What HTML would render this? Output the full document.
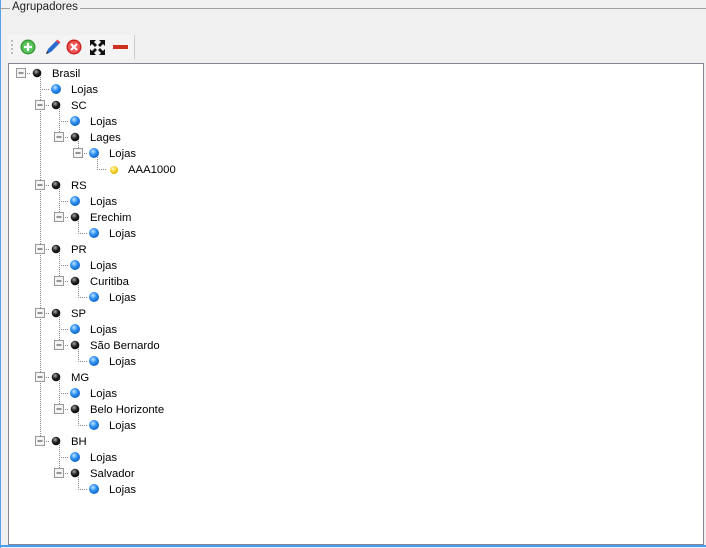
<!DOCTYPE html>
<html><head><style>
body{margin:0;width:706px;height:548px;background:#f0f0f0;position:relative;overflow:hidden;font-family:"Liberation Sans",sans-serif}
.gl{position:absolute;top:8px;left:0;width:706px;height:1px;background:#a0a0a0}
.lt{position:absolute;left:10px;top:0;background:#f0f0f0;padding:0 2px;font-size:11.5px;color:#222;line-height:15px}
.lb{position:absolute;left:0;top:0;width:1px;height:548px;background:#5aa0e6}
.bb{position:absolute;left:0;top:545px;width:706px;height:2px;background:#4a9cf0}
.tb{position:absolute;left:8px;top:35px;width:126px;height:24px;background:#f4f4f4;border-right:1px solid #ccc}
.tree{position:absolute;left:8px;top:63px;width:694px;height:480px;background:#fff;border:1px solid #828790}
</style></head><body>
<div class="lb"></div>
<div class="gl"></div><div class="lt">Agrupadores</div>
<div class="tb"></div>
<svg style="position:absolute;left:0;top:0" width="706" height="548">
<g fill="#bbb"><rect x="11" y="40" width="2" height="2"/><rect x="11" y="44" width="2" height="2"/><rect x="11" y="48" width="2" height="2"/><rect x="11" y="52" width="2" height="2"/></g>
<circle cx="28" cy="47" r="7.5" fill="#3a9a3a"/><circle cx="28" cy="47" r="6" fill="#5cc45c"/><path d="M24 47h8M28 43v8" stroke="#fff" stroke-width="2.2"/>
<path d="M46 54l2-5 8-8 3 3-8 8z" fill="#2a6bd0"/><path d="M56 41l3 3 1.5-1.5-3-3z" fill="#e04040"/><path d="M46 54l1-3 2 2z" fill="#333"/>
<circle cx="74" cy="47" r="7.5" fill="#c22"/><circle cx="74" cy="47" r="6" fill="#e55"/><path d="M71 44l6 6M77 44l-6 6" stroke="#fff" stroke-width="2.2"/>
<g fill="#111"><path d="M90 40h6l-2 2 3 3-2 2-3-3-2 2z"/><path d="M105 40v6l-2-2-3 3-2-2 3-3-2-2z"/><path d="M90 55v-6l2 2 3-3 2 2-3 3 2 2z"/><path d="M105 55h-6l2-2-3-3 2-2 3 3 2-2z"/></g>
<rect x="113" y="45" width="15" height="4" fill="#d03020"/>
</svg>
<div class="tree"></div>
<svg style="position:absolute;left:0;top:0" width="706" height="548" font-family="Liberation Sans, sans-serif" font-size="11.3">
<defs>
<radialGradient id="k" cx="40%" cy="35%" r="70%"><stop offset="0" stop-color="#aaa"/><stop offset=".5" stop-color="#222"/><stop offset="1" stop-color="#000"/></radialGradient>
<radialGradient id="b" cx="40%" cy="35%" r="70%"><stop offset="0" stop-color="#bfe3ff"/><stop offset=".5" stop-color="#2a8ef0"/><stop offset="1" stop-color="#0b5fc0"/></radialGradient>
<radialGradient id="y" cx="40%" cy="35%" r="70%"><stop offset="0" stop-color="#fff8c0"/><stop offset=".6" stop-color="#f5d020"/><stop offset="1" stop-color="#d8a800"/></radialGradient>
<g id="bx"><rect x="-4.5" y="-4.5" width="9" height="9" fill="#f4f4f4" stroke="#999"/><path d="M-2.5 0h5" stroke="#333"/></g>
</defs>
<g stroke="#888" stroke-dasharray="1 1" fill="none">
<path d="M40.5 73v368M59.5 105v32M78.5 137v16M97.5 153v16M59.5 185v32M78.5 217v16M59.5 249v32M78.5 281v16M59.5 313v32M78.5 345v16M59.5 377v32M78.5 409v16M59.5 441v32M78.5 473v16"/>
<path d="M21 73.5h10M40 89.5h10M40 105.5h10M59 121.5h10M59 137.5h10M78 153.5h10M97 169.5h10M40 185.5h10M59 201.5h10M59 217.5h10M78 233.5h10M40 249.5h10M59 265.5h10M59 281.5h10M78 297.5h10M40 313.5h10M59 329.5h10M59 345.5h10M78 361.5h10M40 377.5h10M59 393.5h10M59 409.5h10M78 425.5h10M40 441.5h10M59 457.5h10M59 473.5h10M78 489.5h10"/>
</g>
<use href="#bx" x="21" y="73"/><use href="#bx" x="40" y="105"/><use href="#bx" x="59" y="137"/><use href="#bx" x="78" y="153"/>
<use href="#bx" x="40" y="185"/><use href="#bx" x="59" y="217"/><use href="#bx" x="40" y="249"/><use href="#bx" x="59" y="281"/>
<use href="#bx" x="40" y="313"/><use href="#bx" x="59" y="345"/><use href="#bx" x="40" y="377"/><use href="#bx" x="59" y="409"/>
<use href="#bx" x="40" y="441"/><use href="#bx" x="59" y="473"/>
<g fill="url(#k)"><circle cx="37" cy="73" r="4.3"/><circle cx="56" cy="105" r="4.3"/><circle cx="75" cy="137" r="4.3"/><circle cx="56" cy="185" r="4.3"/><circle cx="75" cy="217" r="4.3"/><circle cx="56" cy="249" r="4.3"/><circle cx="75" cy="281" r="4.3"/><circle cx="56" cy="313" r="4.3"/><circle cx="75" cy="345" r="4.3"/><circle cx="56" cy="377" r="4.3"/><circle cx="75" cy="409" r="4.3"/><circle cx="56" cy="441" r="4.3"/><circle cx="75" cy="473" r="4.3"/></g>
<g fill="url(#b)"><circle cx="56" cy="89" r="5"/><circle cx="75" cy="121" r="5"/><circle cx="94" cy="153" r="5"/><circle cx="75" cy="201" r="5"/><circle cx="94" cy="233" r="5"/><circle cx="75" cy="265" r="5"/><circle cx="94" cy="297" r="5"/><circle cx="75" cy="329" r="5"/><circle cx="94" cy="361" r="5"/><circle cx="75" cy="393" r="5"/><circle cx="94" cy="425" r="5"/><circle cx="75" cy="457" r="5"/><circle cx="94" cy="489" r="5"/></g>
<circle cx="114" cy="170" r="4" fill="url(#y)"/>
<g fill="#000">
<text x="52" y="77">Brasil</text><text x="71" y="93">Lojas</text><text x="71" y="109">SC</text><text x="90" y="125">Lojas</text><text x="90" y="141">Lages</text><text x="109" y="157">Lojas</text><text x="128" y="173">AAA1000</text>
<text x="71" y="189">RS</text><text x="90" y="205">Lojas</text><text x="90" y="221">Erechim</text><text x="109" y="237">Lojas</text>
<text x="71" y="253">PR</text><text x="90" y="269">Lojas</text><text x="90" y="285">Curitiba</text><text x="109" y="301">Lojas</text>
<text x="71" y="317">SP</text><text x="90" y="333">Lojas</text><text x="90" y="349">São Bernardo</text><text x="109" y="365">Lojas</text>
<text x="71" y="381">MG</text><text x="90" y="397">Lojas</text><text x="90" y="413">Belo Horizonte</text><text x="109" y="429">Lojas</text>
<text x="71" y="445">BH</text><text x="90" y="461">Lojas</text><text x="90" y="477">Salvador</text><text x="109" y="493">Lojas</text>
</g>
</svg>
<div class="bb"></div>
</body></html>
